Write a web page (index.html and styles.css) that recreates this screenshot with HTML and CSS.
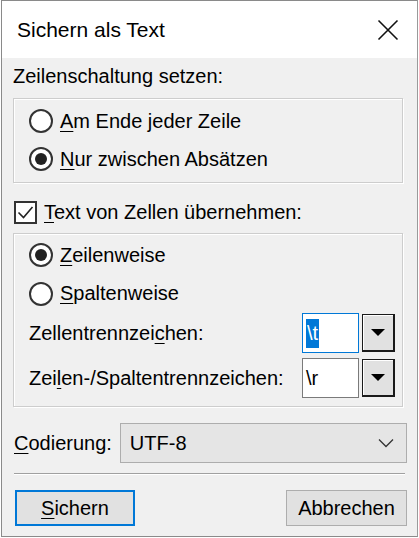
FILE: index.html
```html
<!DOCTYPE html>
<html lang="de">
<head>
    <meta charset="UTF-8">
    <title>Sichern als Text</title>
    <link rel="stylesheet" href="styles.css">
</head>
<body>
    <div class="window">
        <div class="titlebar">
            <span class="title">Sichern als Text</span>
            <svg class="close" width="22" height="22" viewBox="0 0 22 22">
                <path d="M1.5 1.5 L20.5 20.5 M20.5 1.5 L1.5 20.5" stroke="#111" stroke-width="1.6" fill="none"/>
            </svg>
        </div>

        <div class="content">
            <div class="heading">Zeilenschaltung setzen:</div>

            <div class="group group-first">
                <div class="option">
                    <span class="radio"></span>
                    <span><u>A</u>m Ende jeder Zeile</span>
                </div>
                <div class="option">
                    <span class="radio checked"></span>
                    <span><u>N</u>ur zwischen Absätzen</span>
                </div>
            </div>

            <div class="check-row">
                <span class="checkbox">
                    <svg width="19" height="19" viewBox="0 0 19 19">
                        <path d="M2.5 9.5 L7.5 14.5 L16.5 4" stroke="#222" stroke-width="1.6" fill="none"/>
                    </svg>
                </span>
                <span><u>T</u>ext von Zellen übernehmen:</span>
            </div>

            <div class="group group-second">
                <div class="option">
                    <span class="radio checked"></span>
                    <span><u>Z</u>eilenweise</span>
                </div>
                <div class="option option-tall">
                    <span class="radio"></span>
                    <span><u>S</u>paltenweise</span>
                </div>
                <div class="field">
                    <span class="field-label">Zellentrennzei<u>c</u>hen:</span>
                    <span class="input focused"><span class="selected">\t</span></span>
                    <span class="drop-btn"><span class="arrow"></span></span>
                </div>
                <div class="field field-second">
                    <span class="field-label">Zei<u>l</u>en-/Spaltentrennzeichen:</span>
                    <span class="input">\r</span>
                    <span class="drop-btn"><span class="arrow"></span></span>
                </div>
            </div>

            <div class="encoding">
                <span class="encoding-label"><u>C</u>odierung:</span>
                <div class="select">
                    <span>UTF-8</span>
                    <svg width="16" height="10" viewBox="0 0 16 10">
                        <path d="M1 1.5 L8 8.5 L15 1.5" stroke="#333" stroke-width="1.3" fill="none"/>
                    </svg>
                </div>
            </div>

            <div class="separator"></div>

            <div class="buttons">
                <span class="button default"><u>S</u>ichern</span>
                <span class="button">Abbrechen</span>
            </div>
        </div>
    </div>
</body>
</html>
```

FILE: styles.css
```css
body {
    margin: 0;
    padding: 0;
    background-color: #ffffff;
    font-family: 'Liberation Sans', Arial, sans-serif;
    font-size: 20px;
    color: #000;
}

u {
    text-decoration-thickness: 1px;
    text-underline-offset: 3px;
}

.window {
    width: 417px;
    height: 537px;
    margin-left: 1px;
    border: 1px solid #8a8a8a;
    border-right-color: #9a9a9a;
    box-sizing: border-box;
    display: flex;
    flex-direction: column;
    background-color: #f0f0f0;
}

.titlebar {
    height: 57px;
    box-sizing: border-box;
    background-color: #ffffff;
    display: flex;
    align-items: center;
    justify-content: space-between;
    padding: 0 18px 0 15px;
    flex-shrink: 0;
}

.title {
    font-size: 21px;
    color: #000;
}

.content {
    padding: 0 14px 0 11px;
}

.heading {
    line-height: 24px;
    margin-top: 6px;
    margin-bottom: 10px;
}

.group {
    border: 1px solid #cdcdcd;
    box-shadow: inset 1px 1px 0 #ffffff, 1px 1px 0 #ffffff;
    padding-left: 15px;
    padding-right: 7px;
}

.group-first {
    padding-top: 3px;
    padding-bottom: 4px;
}

.group-second {
    padding-top: 2px;
    padding-bottom: 8px;
}

.option {
    height: 38px;
    display: flex;
    align-items: center;
    gap: 7px;
}

.option-tall {
    height: 39px;
}

.radio {
    width: 20px;
    height: 20px;
    border: 2px solid #333;
    border-radius: 50%;
    background-color: #fff;
    display: flex;
    align-items: center;
    justify-content: center;
    flex-shrink: 0;
}

.radio.checked::after {
    content: "";
    width: 12px;
    height: 12px;
    border-radius: 50%;
    background-color: #222;
}

.check-row {
    height: 42px;
    margin-top: 8px;
    display: flex;
    align-items: center;
    gap: 7px;
    padding-left: 1px;
}

.checkbox {
    width: 19px;
    height: 19px;
    border: 2px solid #333;
    background-color: #fff;
    display: flex;
    flex-shrink: 0;
}

.field {
    height: 40px;
    display: flex;
    align-items: center;
    gap: 3px;
}

.field-second {
    margin-top: 5px;
}

.field-label {
    flex: 1;
}

.input {
    width: 57px;
    height: 40px;
    box-sizing: border-box;
    border: 1px solid #7a7a7a;
    background-color: #fff;
    display: flex;
    align-items: center;
    padding-left: 3px;
}

.input.focused {
    border-color: #0078d7;
}

.selected {
    background-color: #0078d7;
    color: #fff;
    padding: 3px 1px;
}

.drop-btn {
    width: 33px;
    height: 38px;
    box-sizing: border-box;
    border: 1px solid #1a1a1a;
    border-right-width: 2px;
    border-bottom-width: 2px;
    background-color: #e1e1e1;
    box-shadow: inset 1px 1px 0 #ffffff;
    display: flex;
    align-items: center;
    justify-content: center;
}

.arrow {
    width: 0;
    height: 0;
    border-left: 7px solid transparent;
    border-right: 7px solid transparent;
    border-top: 7px solid #000;
}

.encoding {
    margin-top: 16px;
    margin-right: -4px;
    display: flex;
    align-items: center;
    gap: 8px;
}

.encoding-label {
    padding-left: 1px;
}

.select {
    flex: 1;
    height: 40px;
    box-sizing: border-box;
    border: 1px solid #adadad;
    background-color: #e5e5e5;
    display: flex;
    align-items: center;
    justify-content: space-between;
    padding: 0 12px 0 9px;
    color: #000;
}

.separator {
    margin: 10px -2px 0 1px;
    height: 1px;
    background-color: #a0a0a0;
    border-bottom: 1px solid #fff;
}

.buttons {
    margin-top: 15px;
    margin-right: -4px;
    display: flex;
    justify-content: space-between;
    padding-left: 2px;
}

.button {
    height: 36px;
    box-sizing: border-box;
    border: 1px solid #adadad;
    background-color: #e1e1e1;
    display: flex;
    align-items: center;
    justify-content: center;
    width: 121px;
}

.button.default {
    width: 120px;
    border: 2px solid #0078d7;
}
```
